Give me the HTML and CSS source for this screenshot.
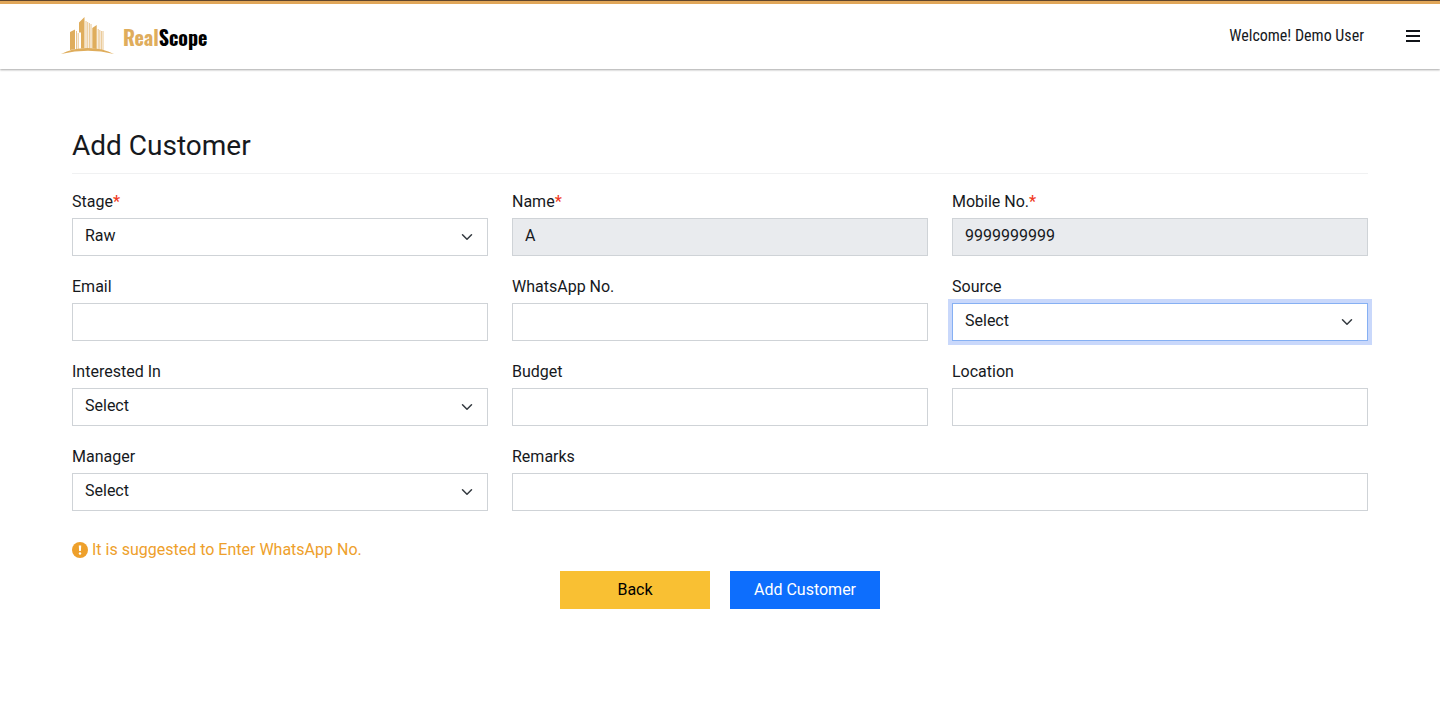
FILE: index.html
```html
<!DOCTYPE html>
<html lang="en">
<head>
<meta charset="utf-8">
<meta name="viewport" content="width=device-width, initial-scale=1">
<title>RealScope - Add Customer</title>
<link rel="stylesheet" href="styles.css">
</head>
<body>
<header class="topbar">
  <a class="brand" href="#">
    <svg class="brand-mark" viewBox="0 0 53 38" aria-hidden="true">
      <path d="M9 15l5-2.500v19.800l-5 .700zM18 5.500l5.500-5.500v31.500h-3.500v-16h-2zM31.300 11l4.400-3v24l-4.400-.500z"/>
      <path class="thin" d="M15.500 14v18M17.200 16v16M25 4v28M26.700 5v27M28.400 6v26M30 7v25M37.200 12v21M38.800 13v20M40.400 14v19M42 14v20"/>
      <path d="M0 37Q11 31 26.500 31T53 37Q40 33.800 27 33.800T0 37z"/>
    </svg>
    <span class="brand-name"><span class="brand-accent">Real</span>Scope</span>
  </a>
  <div class="user-area">
    <span class="welcome">Welcome! Demo User</span>
    <button class="menu" type="button" aria-label="Menu">
      <svg class="menu-icon" viewBox="0 0 14 12" aria-hidden="true"><path d="M0 0h14v2H0zM0 5h14v2H0zM0 10h14v2H0z"/></svg>
    </button>
  </div>
</header>
<main class="page">
  <h1 class="title">Add Customer</h1>
  <form>
    <div class="grid">
      <div class="field"><label for="stage">Stage<span class="required">*</span></label><select class="control select" id="stage"><option>Raw</option></select></div>
      <div class="field"><label for="name">Name<span class="required">*</span></label><input class="control" id="name" type="text" value="A" disabled></div>
      <div class="field"><label for="mobile">Mobile No.<span class="required">*</span></label><input class="control" id="mobile" type="tel" value="9999999999" disabled></div>
      <div class="field"><label for="email">Email</label><input class="control" id="email" type="email"></div>
      <div class="field"><label for="whatsapp">WhatsApp No.</label><input class="control" id="whatsapp" type="tel"></div>
      <div class="field"><label for="source">Source</label><select class="control select active" id="source"><option>Select</option></select></div>
      <div class="field"><label for="interest">Interested In</label><select class="control select" id="interest"><option>Select</option></select></div>
      <div class="field"><label for="budget">Budget</label><input class="control" id="budget" type="text"></div>
      <div class="field"><label for="location">Location</label><input class="control" id="location" type="text"></div>
      <div class="field"><label for="manager">Manager</label><select class="control select" id="manager"><option>Select</option></select></div>
      <div class="field wide"><label for="remarks">Remarks</label><input class="control" id="remarks" type="text"></div>
    </div>
    <p class="hint">
      <svg class="hint-icon" viewBox="0 0 16 16" aria-hidden="true"><circle cx="8" cy="8" r="8"/><path class="mark" d="M6.800 3.500h2.400l-.300 5.500H7.100z"/><circle class="mark" cx="8" cy="11.500" r="1.200"/></svg>
      <span>It is suggested to Enter WhatsApp No.</span>
    </p>
    <div class="actions">
      <button class="button back" type="button">Back</button>
      <button class="button submit" type="submit">Add Customer</button>
    </div>
  </form>
</main>
</body>
</html>
```
FILE: styles.css
```css
* {
  box-sizing: border-box;
}

body {
  margin: 0;
  background: #fff;
  color: #16191d;
  font: 16px/24px Roboto, "Liberation Sans", sans-serif;
  border-top: 1px solid #60452c;
}

.topbar {
  display: flex;
  align-items: center;
  justify-content: space-between;
  height: 68px;
  padding: 0 20px 2px 61px;
  border-top: 3px solid #e0a659;
  box-shadow: 0 1px 2px rgba(0, 0, 0, 0.35);
}

.brand {
  display: flex;
  align-items: center;
  gap: 9px;
  color: #000;
  text-decoration: none;
}

.brand-mark {
  width: 53px;
  height: 38px;
  fill: #dfad5c;
}

.thin {
  fill: none;
  stroke: #e3b874;
  stroke-width: 0.8;
}

.brand-name {
  padding-top: 2px;
  font: 700 20px/30px Oswald, "Roboto Condensed", "Liberation Sans Narrow", Roboto, sans-serif;
}

.brand-accent {
  color: #dfad5c;
}

.user-area {
  display: flex;
  align-items: center;
  gap: 42px;
}

.welcome {
  font-family: "Roboto Condensed", "Liberation Sans Narrow", Roboto, sans-serif;
}

.menu {
  display: flex;
  padding: 0;
  border: 0;
  background: none;
}

.menu-icon {
  width: 14px;
  height: 12px;
  fill: #111419;
}

.page {
  padding: 60px 72px 0;
}

.title {
  margin: 0 0 16px;
  padding-bottom: 11px;
  border-bottom: 1px solid #f0f1f2;
  font-size: 28px;
  line-height: 33px;
  font-weight: 400;
}

.grid {
  display: grid;
  grid-template-columns: repeat(3, 1fr);
  gap: 19px 24px;
}

.field {
  display: flex;
  flex-direction: column;
  gap: 4px;
}

.wide {
  grid-column: span 2;
}

.required {
  color: #f03a24;
  font-weight: 500;
}

.control {
  width: 100%;
  height: 38px;
  padding: 0 12px 4px;
  border: 1px solid #cfd3d7;
  border-radius: 0;
  background-color: #fff;
  color: #16191d;
  font: inherit;
  opacity: 1;
}

.control:disabled {
  background-color: #e9ebee;
}

.select {
  appearance: none;
  padding-bottom: 2px;
  background-image: url("data:image/svg+xml,%3Csvg xmlns='http://www.w3.org/2000/svg' viewBox='0 0 16 16'%3E%3Cpath fill='none' stroke='%23343a40' stroke-linecap='round' stroke-linejoin='round' stroke-width='2' d='m2 5 6 6 6-6'/%3E%3C/svg%3E");
  background-repeat: no-repeat;
  background-position: right 14px center;
  background-size: 12px 12px;
}

.active {
  border-color: #86b0f3;
  box-shadow: 0 0 0 4px #c9d8fb;
}

.hint {
  display: flex;
  align-items: center;
  gap: 4px;
  margin: 27px 0 9px;
  color: #eea02b;
}

.hint-icon {
  width: 16px;
  height: 16px;
  fill: #eea02b;
}

.mark {
  fill: #fff;
}

.actions {
  display: flex;
  justify-content: center;
  gap: 20px;
}

.button {
  width: 150px;
  height: 38px;
  padding: 0;
  border: 0;
  font: inherit;
}

.back {
  background: #f9c033;
  color: #000;
}

.submit {
  background: #0d6efd;
  color: #fff;
}
```
